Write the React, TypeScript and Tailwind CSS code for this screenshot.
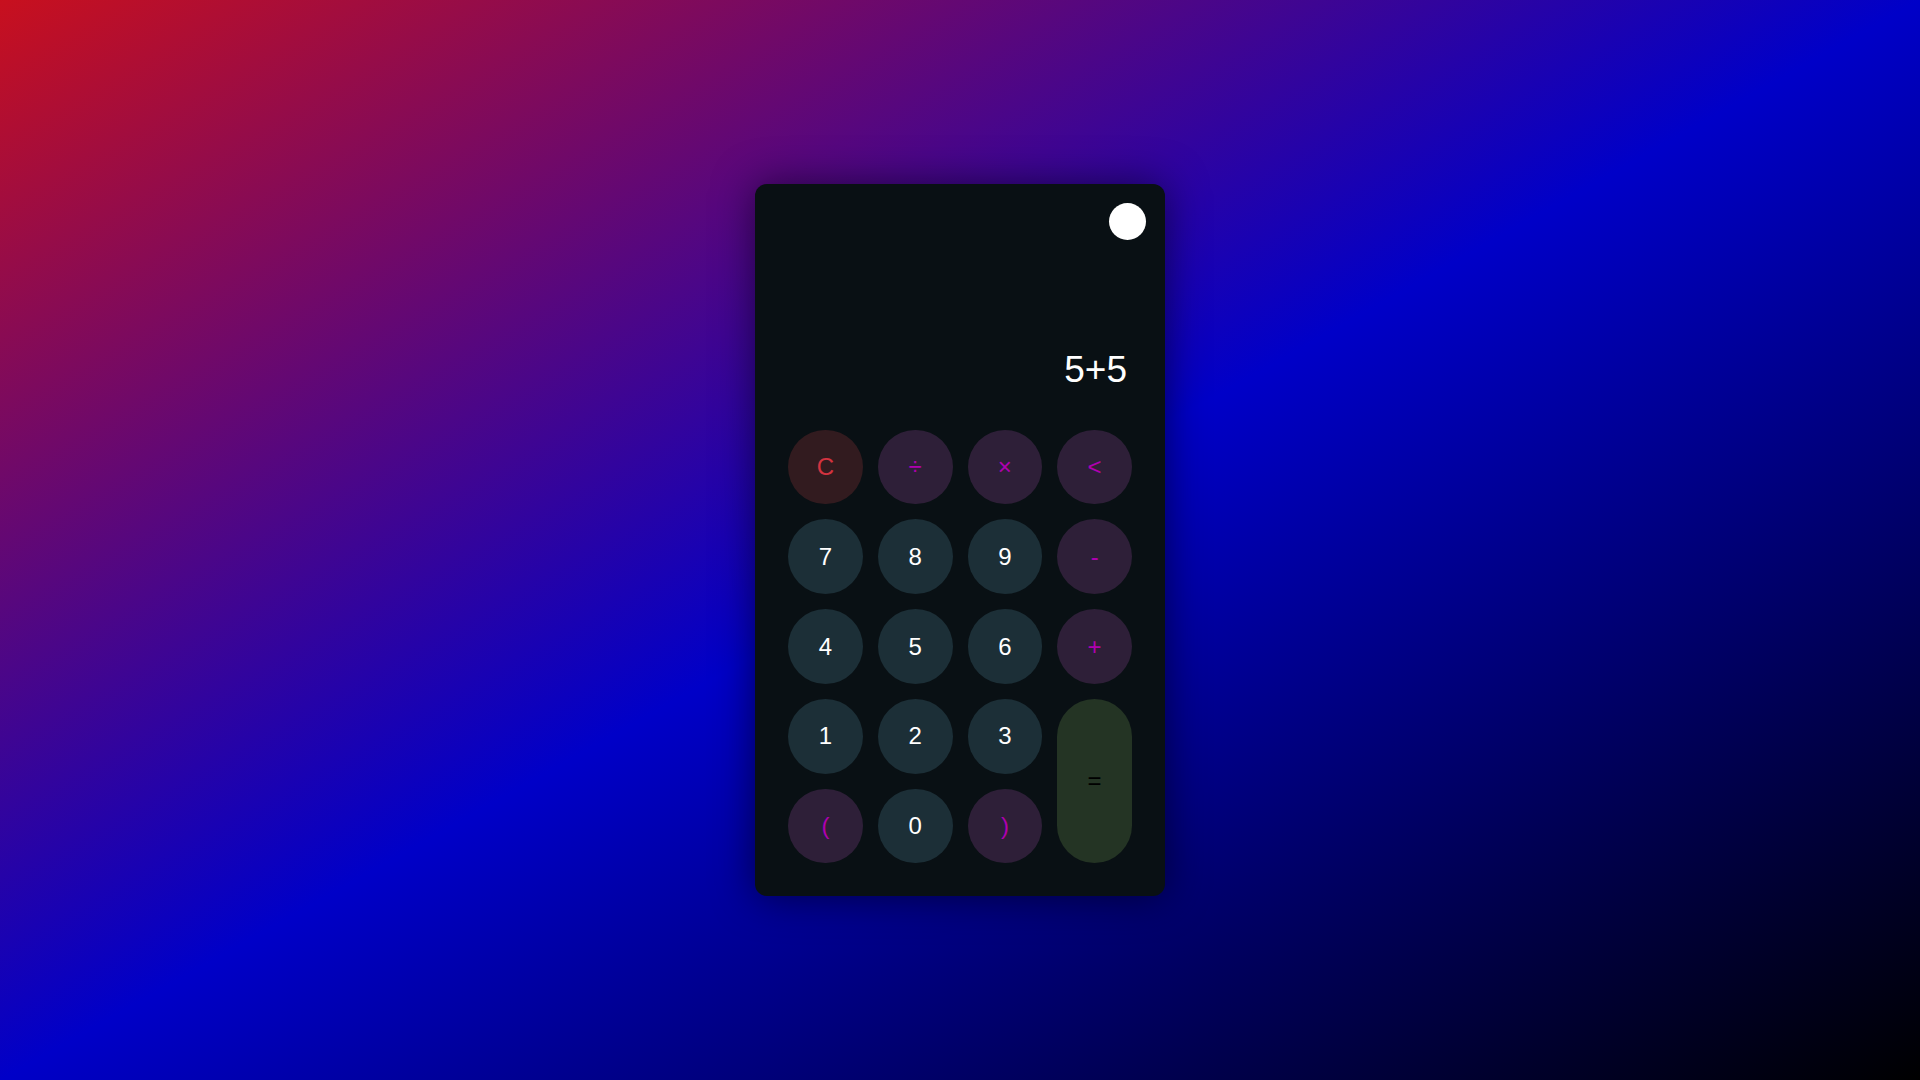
import React from "react";

type Key = { label: string; kind: "num" | "op" | "clear" };

const keys: Key[] = [
    { label: "C", kind: "clear" },
    { label: "÷", kind: "op" },
    { label: "×", kind: "op" },
    { label: "<", kind: "op" },
    { label: "7", kind: "num" },
    { label: "8", kind: "num" },
    { label: "9", kind: "num" },
    { label: "-", kind: "op" },
    { label: "4", kind: "num" },
    { label: "5", kind: "num" },
    { label: "6", kind: "num" },
    { label: "+", kind: "op" },
    { label: "1", kind: "num" },
    { label: "2", kind: "num" },
    { label: "3", kind: "num" },
    { label: "(", kind: "op" },
    { label: "0", kind: "num" },
    { label: ")", kind: "op" },
];

const styles = {
    num: "bg-[#1c2f37] text-white",
    op: "bg-[#2e1f38] text-[#b000b0]",
    clear: "bg-[#321b1f] text-[#d3333f]",
};

export default function App() {
    return (
        <div className="min-h-screen w-full flex items-center justify-center bg-[linear-gradient(to_bottom_right,#c8101e,#0000c8,#000000)] font-['Liberation_Sans',Arial,sans-serif]">
            <div className="relative w-[410px] rounded-xl bg-[#091014] px-[33px] pb-[33px] shadow-[0_0_40px_rgba(0,0,0,0.55)]">
                <div className="absolute top-[19px] right-[19px] w-[37px] h-[37px] rounded-full bg-white" />

                <div className="h-[246px] flex items-end justify-end pb-[42px] pr-[5px]">
                    <span className="text-[37px] leading-none text-white">5+5</span>
                </div>

                <div className="grid grid-cols-4 gap-[15px]">
                    {keys.slice(0, 12).map(k => (
                        <button key={k.label} className={`aspect-square rounded-full flex items-center justify-center text-[24px] ${styles[k.kind]}`}>
                            {k.label}
                        </button>
                    ))}
                    {keys.slice(12, 15).map(k => (
                        <button key={k.label} className={`aspect-square rounded-full flex items-center justify-center text-[24px] ${styles[k.kind]}`}>
                            {k.label}
                        </button>
                    ))}
                    <button className="row-span-2 rounded-full bg-[#243424] text-black text-[24px] flex items-center justify-center">
                        =
                    </button>
                    {keys.slice(15).map(k => (
                        <button key={k.label} className={`aspect-square rounded-full flex items-center justify-center text-[24px] ${styles[k.kind]}`}>
                            {k.label}
                        </button>
                    ))}
                </div>
            </div>
        </div>
    );
}
